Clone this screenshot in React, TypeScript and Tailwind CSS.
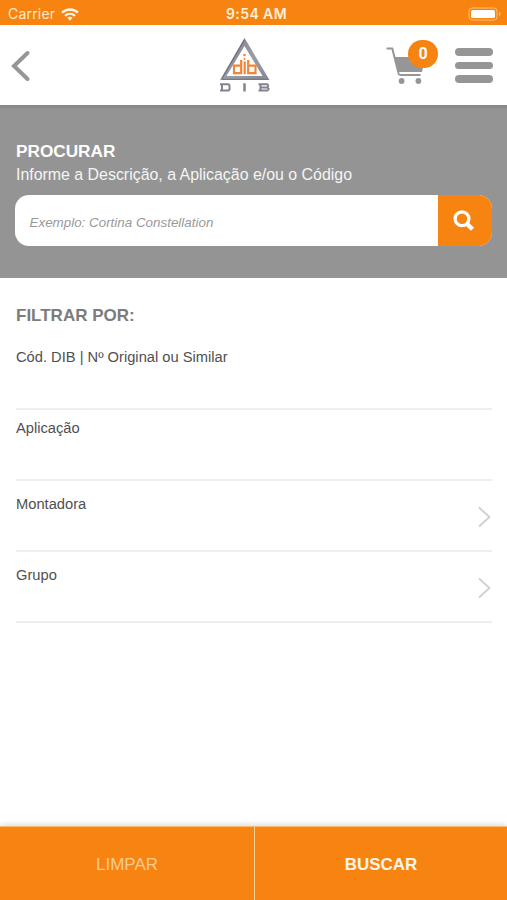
import React from 'react';

function StatusBar() {
  return (
    <div className="grid h-[25px] shrink-0 grid-cols-3 items-center bg-[#f78310] pt-[3px] font-['Inter','Liberation_Sans',sans-serif] text-[14px] leading-[22px] text-[#ffe9c8]">
      <div className="flex items-center gap-[6px] pl-[8px]">
        <span className="tracking-[0.2px]">Carrier</span>
        <svg width="18" height="13" viewBox="0 0 18 13" fill="none" stroke="#fff6e6" strokeWidth="2.3">
          <path d="M1 4.7C5.6 .4 12.4 .4 17 4.7" />
          <path d="M4 7.9c2.9-2.6 7.1-2.6 10 0" />
          <path d="M6.4 9.8c1.6-1.3 3.6-1.3 5.2 0L9 12.7z" fill="#fff6e6" stroke="none" />
        </svg>
      </div>
      <div className="whitespace-nowrap pl-[6px] text-center font-semibold tracking-[0.4px] text-[#fff0d8]">9:54 AM</div>
      <div className="flex justify-end pr-[2px]">
        <svg className="-mt-px" width="37" height="14" viewBox="0 0 37 14">
          <rect x="1" y="1" width="28" height="12" rx="3" fill="none" stroke="#fbc079" />
          <rect x="3" y="3" width="24" height="8" rx="1.5" fill="#fff" />
          <path d="M31 5v4c2-.6 2-3.400 0-4z" fill="#fbc079" />
        </svg>
      </div>
    </div>
  );
}

function Logo() {
  return (
    <svg width="54" height="56" viewBox="0 0 54 56">
      <defs>
        <linearGradient id="metal" x1="0" y1="0" x2="1" y2="1">
          <stop offset="0" stopColor="#777984" />
          <stop offset=".55" stopColor="#9b9da7" />
          <stop offset="1" stopColor="#858792" />
        </linearGradient>
      </defs>
      <path fillRule="evenodd" d="M26.500 1L51.500 43H2zM26.500 9L8.500 39H44.500z" fill="url(#metal)" />
      <path d="M26.500 2.500L4 41.500" stroke="#666874" strokeWidth="1" />
      <path d="M4 42.300H50" stroke="#777984" strokeWidth="1.200" />
      <g fill="none" stroke="#f28536" strokeWidth="2.200">
        <path d="M23.200 23V36.200H16V28.700H23.200" />
        <path d="M26.700 24.500v12.700" />
        <path d="M30.200 23V36.200H37.500V28.700H30.200" />
      </g>
      <circle cx="26.500" cy="18" r="1.300" fill="#f28536" />
      <circle cx="26.500" cy="22" r="1" fill="#f28536" />
      <g fill="none" stroke="#81838e" strokeWidth="2">
        <path d="M2 47.300H10Q11.500 47.300 11.500 49V52Q11.500 53.500 10 53.500H2M4 47V54" />
        <path d="M26.500 46.300v8.200" strokeWidth="2.500" />
        <path d="M40.500 47.300H49.500Q51 49 49 50.400H42.500H49Q52 52 49.500 53.500H40.500M42.500 47V54" />
      </g>
    </svg>
  );
}

function Header() {
  return (
    <header className="grid h-[80px] shrink-0 grid-cols-[1fr_54px_1fr] items-center bg-white">
      <button aria-label="Voltar" className="justify-self-start pl-[11px] pt-[2px]">
        <svg width="20" height="32" viewBox="0 0 20 32" fill="none" stroke="#969696" strokeWidth="4" strokeLinecap="round">
          <path d="M16.500 3L3 16L16.500 29" />
        </svg>
      </button>
      <div className="-ml-[9px]">
        <Logo />
      </div>
      <div className="flex items-center justify-end gap-[16px] pr-[14px]">
        <div className="relative mb-[5px] h-[45px] w-[53px]">
          <svg className="mt-[6px]" width="42" height="40" viewBox="0 0 42 40">
            <path d="M.5 2.500H6.300L12.500 27Q13 29 15 29H34.500" fill="none" stroke="#969696" strokeWidth="2" />
            <path d="M8 11H39L36 26H12z" fill="#969696" />
            <circle cx="15.600" cy="35" r="2.900" fill="#969696" />
            <circle cx="32.400" cy="35" r="2.900" fill="#969696" />
            <path d="M13.500 27H34" stroke="#fff" strokeWidth="1.600" />
          </svg>
          <span className="absolute right-px top-0 flex h-[28px] w-[30px] items-center justify-center rounded-full bg-[#f78310] font-['Roboto',sans-serif] text-[16px] font-bold text-white">0</span>
        </div>
        <button aria-label="Menu" className="mt-px flex w-[38px] flex-col gap-[6px]">
          <span className="h-[7.400px] rounded-full bg-[#969696]" />
          <span className="h-[7.400px] rounded-full bg-[#969696]" />
          <span className="h-[7.400px] rounded-full bg-[#969696]" />
        </button>
      </div>
    </header>
  );
}

function SearchPanel() {
  return (
    <section className="h-[173px] shrink-0 bg-[#949494] bg-[linear-gradient(#858585,#949494_5px)] px-[15px] pt-[35px] text-white">
      <h1 className="pl-px text-[17.200px] font-bold leading-[22px]">PROCURAR</h1>
      <p className="pl-px pt-px text-[15.920px] leading-[23px] text-[#f5f5f5]">Informe a Descrição, a Aplicação e/ou o Código</p>
      <div className="mt-[9px] flex h-[51px] overflow-hidden rounded-[14px] bg-white">
        <input
          className="min-w-0 flex-1 px-[14.500px] pt-[6px] text-[13.400px] italic outline-none placeholder:text-[#999]"
          placeholder="Exemplo: Cortina Constellation"
        />
        <button aria-label="Procurar" className="flex w-[54px] items-center justify-center bg-[#f78310]">
          <svg className="mr-[2px]" width="22" height="22" viewBox="0 0 22 22" fill="none" stroke="#fff">
            <circle cx="9" cy="8.800" r="6.900" strokeWidth="3.300" />
            <path d="M13.700 13.500L19.500 19.300" strokeWidth="4.400" />
          </svg>
        </button>
      </div>
    </section>
  );
}

function Chevron() {
  return (
    <svg width="14" height="22" viewBox="0 0 14 22" fill="none" stroke="#cfcfcf" strokeWidth="1.800">
      <path d="M2 1.500L12.500 11L2 20.500" />
    </svg>
  );
}

type FilterRowProps = { label: string; select?: boolean };

function FilterRow({ label, select = false }: FilterRowProps) {
  return (
    <li className={`flex h-[71px] justify-between border-b-2 border-[#eee] ${select ? 'pt-[13px]' : 'pt-[8px]'}`}>
      <span className="text-[14.700px] leading-[20px] text-[#505050]">{label}</span>
      {select && <span className="pr-px pt-[12px]"><Chevron /></span>}
    </li>
  );
}

export default function App() {
  return (
    <div className="flex h-[900px] w-[507px] flex-col overflow-hidden bg-white font-['Liberation_Sans',Arial,sans-serif]">
      <StatusBar />
      <Header />
      <SearchPanel />
      <main className="flex-1 pl-[16px] pr-[15px] pt-[27px]">
        <h2 className="text-[17px] font-bold leading-[22px] text-[#7c7c7c]">FILTRAR POR:</h2>
        <ul className="mt-[12px]">
          <FilterRow label="Cód. DIB | Nº Original ou Similar" />
          <FilterRow label="Aplicação" />
          <FilterRow label="Montadora" select />
          <FilterRow label="Grupo" select />
        </ul>
      </main>
      <footer className="grid h-[74px] shrink-0 grid-cols-[255px_1fr] border-t border-[#fbb972] bg-[#f78310] text-[17px] shadow-[0_-1px_6px_#d5d5d5]">
        <button className="border-r border-[#ffd39a] pt-[2px] text-[#fccb91]">LIMPAR</button>
        <button className="pt-[2px] font-bold text-[#fff5e8]">BUSCAR</button>
      </footer>
    </div>
  );
}
